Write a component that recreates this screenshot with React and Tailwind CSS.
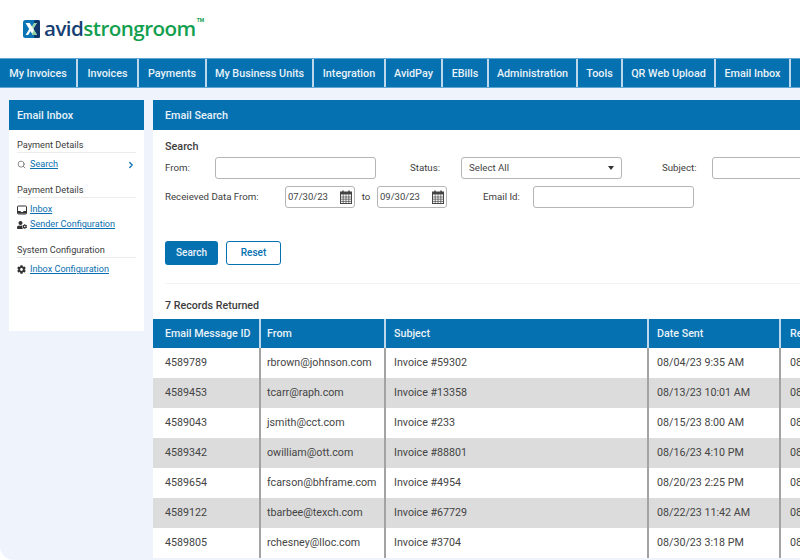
import React from "react";
import { FaCog, FaUserCog } from "react-icons/fa";
import { Search, ChevronRight } from "lucide-react";

const navItems = [
    ["My Invoices", "w-[78px]"],
    ["Invoices", "w-[61px]"],
    ["Payments", "w-[68px]"],
    ["My Business Units", "w-[107px]"],
    ["Integration", "w-[72px]"],
    ["AvidPay", "w-[57px]"],
    ["EBills", "w-[46px]"],
    ["Administration", "w-[89px]"],
    ["Tools", "w-[45px]"],
    ["QR Web Upload", "w-[93px]"],
    ["Email Inbox", "w-[75px]"],
];

const rows = [
    ["4589789", "rbrown@johnson.com", "Invoice #59302", "08/04/23 9:35 AM", "08/04/23"],
    ["4589453", "tcarr@raph.com", "Invoice #13358", "08/13/23 10:01 AM", "08/13/23"],
    ["4589043", "jsmith@cct.com", "Invoice #233", "08/15/23 8:00 AM", "08/15/23"],
    ["4589342", "owilliam@ott.com", "Invoice #88801", "08/16/23 4:10 PM", "08/16/23"],
    ["4589654", "fcarson@bhframe.com", "Invoice #4954", "08/20/23 2:25 PM", "08/20/23"],
    ["4589122", "tbarbee@texch.com", "Invoice #67729", "08/22/23 11:42 AM", "08/22/23"],
    ["4589805", "rchesney@lloc.com", "Invoice #3704", "08/30/23 3:18 PM", "08/30/23"],
];

const columns = [
    "w-[108px] pl-3",
    "w-[125px] pl-[6px]",
    "w-[263px] pl-2",
    "w-[132px] pl-2",
    "w-[60px] pl-[9px]",
];
const headers = ["Email Message ID", "From", "Subject", "Date Sent", "Received"];

const Logo = () => (
    <div className="flex items-center">
        <svg width="17" height="18" viewBox="0 0 17 18" className="mr-[4px]">
            <rect width="17" height="18" rx="2.5" fill="#0a74b5" />
            <rect x="11" width="6" height="18" rx="1.5" fill="#12386b" />
            <path d="M2.5 3h4.2l2.3 3.8L11.2 3h2.6l-3.5 5.8L14 15H9.8L7.5 11.2 5.2 15H2.6l3.6-6z" fill="#fff" />
            <path d="M9 6.8 11.2 3h2.6l-3.5 5.8L14 15H9.8l-0.7-1.2L11 10z" fill="#8fd0a0" />
        </svg>
        <span className="font-['Open_Sans',sans-serif] text-[20.6px] font-semibold leading-none tracking-[-0.55px] text-[#173f74]">
            avid
        </span>
        <span className="font-['Open_Sans',sans-serif] text-[20.6px] font-semibold leading-none tracking-[-0.55px] text-[#12a04f]">
            strongroom
        </span>
        <span className="mb-4 ml-px text-[5px] font-bold leading-none text-[#12a04f]">TM</span>
    </div>
);

const InboxIcon = () => (
    <svg width="10" height="10" viewBox="0 0 10 10">
        <rect x="0.5" y="1" width="9" height="8" rx="0.8" fill="none" stroke="#333" />
        <path d="M1 6h2.5l0.5 1h2l0.5-1H9v2.5H1z" fill="#333" />
    </svg>
);

const CalendarIcon = () => (
    <svg width="12" height="14" viewBox="0 0 12 14" className="shrink-0">
        <rect x="0.5" y="2" width="11" height="11.5" fill="none" stroke="#444" />
        <rect x="0.5" y="2" width="11" height="2.5" fill="#444" />
        <path d="M3 0.5v3M9 0.5v3" stroke="#444" strokeWidth="1.5" />
        <path d="M0.5 7h11M0.5 9.2h11M0.5 11.4h11M3.2 4.5v9M6 4.5v9M8.8 4.5v9" stroke="#555" strokeWidth="0.8" />
    </svg>
);

const SideGroup = ({ title, className, children }) => (
    <div className={className}>
        <p className="border-b border-[#ececec] pb-[1px] text-[9.2px] leading-[13px] text-[#3d3d3d]">
            {title}
        </p>
        <div className="mt-[5px] flex flex-col gap-[2px]">{children}</div>
    </div>
);

const SideLink = ({ icon, label, active }) => (
    <div className="flex h-[13px] items-center">
        <span className="flex w-[13px] shrink-0 items-center">{icon}</span>
        <a className="text-[9.1px] leading-[13px] text-[#0b6fb0] underline">{label}</a>
        {active && <ChevronRight size={10} strokeWidth={3} className="ml-auto text-[#0b6fb0]" />}
    </div>
);

const Field = ({ className }) => (
    <div className={`h-[22px] rounded-[3px] border border-[#b5b5b5] bg-white ${className}`}></div>
);

const DateField = ({ value }) => (
    <div className="flex h-[22px] w-[70px] items-center justify-between rounded-[3px] border border-[#b5b5b5] bg-white pl-[2px] pr-[2px] text-[9.5px] text-[#444]">
        <span>{value}</span>
        <CalendarIcon />
    </div>
);

export default function App() {
    return (
        <div className="flex h-[560px] w-[800px] flex-col overflow-hidden bg-white font-['Roboto',sans-serif]">
            <div className="flex h-[58px] shrink-0 items-center rounded-tl-[14px] bg-white pb-px pl-[23px]">
                <Logo />
            </div>
            <nav className="flex h-[30px] shrink-0 border-y border-[#5fa6d2] bg-[#0571b0]">
                {navItems.map(([label, width]) => (
                    <div
                        key={label}
                        className={`flex shrink-0 items-center justify-center border-r-2 border-[#bcd8ea] pt-[2px] text-[10.8px] font-medium text-[#e9f2f9] ${width}`}
                    >
                        {label}
                    </div>
                ))}
            </nav>
            <div className="flex min-h-0 flex-1 items-start gap-[9px] rounded-bl-[14px] bg-[#eff3fb] pl-[9px] pt-3">
                <aside className="h-[231px] w-[135px] shrink-0 bg-white">
                    <div className="flex h-[30px] items-center bg-[#0571b0] pl-2 pt-[2px] text-[10.8px] font-medium text-[#e9f2f9]">
                        Email Inbox
                    </div>
                    <div className="px-2 pt-2">
                        <SideGroup title="Payment Details">
                            <SideLink icon={<Search size={9} className="text-[#666]" />} label="Search" active />
                        </SideGroup>
                        <SideGroup title="Payment Details" className="mt-3">
                            <SideLink icon={<InboxIcon />} label="Inbox" />
                            <SideLink icon={<FaUserCog size={10} className="text-[#333]" />} label="Sender Configuration" />
                        </SideGroup>
                        <SideGroup title="System Configuration" className="mt-3">
                            <SideLink icon={<FaCog size={9} className="text-[#333]" />} label="Inbox Configuration" />
                        </SideGroup>
                    </div>
                </aside>
                <main className="flex h-[458px] w-[700px] shrink-0 flex-col bg-white">
                    <div className="flex h-[30px] shrink-0 items-center bg-[#0571b0] pl-3 pt-[2px] text-[10.8px] font-medium text-[#e9f2f9]">
                        Email Search
                    </div>
                    <div className="h-[168px] shrink-0 pl-3 pt-[10px] text-[9.7px] text-[#3d3d3d]">
                        <p className="text-[10.8px] font-medium leading-[13px]">Search</p>
                        <div className="mt-1 flex h-[22px] items-center">
                            <span className="w-[50px]">From:</span>
                            <Field className="w-[161px]" />
                            <span className="ml-[34px] w-[51px]">Status:</span>
                            <div className="flex h-[22px] w-[161px] items-center justify-between rounded-[3px] border border-[#b5b5b5] px-[7px] text-[#444]">
                                <span>Select All</span>
                                <span className="h-0 w-0 border-x-[3px] border-t-[4px] border-x-transparent border-t-[#333]"></span>
                            </div>
                            <span className="ml-10 w-[50px]">Subject:</span>
                            <Field className="w-[120px]" />
                        </div>
                        <div className="mt-[7px] flex h-[22px] items-center">
                            <span className="w-[120px]">Receieved Data From:</span>
                            <DateField value="07/30/23" />
                            <span className="w-[22px] text-center">to</span>
                            <DateField value="09/30/23" />
                            <span className="ml-[36px] w-[50px]">Email Id:</span>
                            <Field className="w-[161px]" />
                        </div>
                        <div className="mt-[33px] flex gap-2">
                            <button className="h-6 w-[53px] rounded-[3px] bg-[#0571b0] pb-[2px] text-[10px] font-medium text-[#e9f2f9]">
                                Search
                            </button>
                            <button className="h-6 w-[55px] rounded-[3px] border border-[#0571b0] bg-white pb-[2px] text-[10px] font-medium text-[#0571b0]">
                                Reset
                            </button>
                        </div>
                        <div className="mt-[18px] border-t border-[#f2f2f2]"></div>
                    </div>
                    <p className="h-[14px] shrink-0 pl-3 text-[10.7px] font-medium leading-[16px] text-[#3d3d3d]">
                        7 Records Returned
                    </p>
                    <table className="mt-[7px] w-[688px] table-fixed border-separate border-spacing-0 text-[10.7px]">
                        <thead>
                            <tr className="h-[29px] bg-[#0571b0] text-[#e9f2f9]">
                                {headers.map((h, i) => (
                                    <th key={h} className={`border-r-2 border-[#bcd8ea] pr-0 pt-[2px] text-left font-medium ${columns[i]}`}>
                                        {h}
                                    </th>
                                ))}
                            </tr>
                        </thead>
                        <tbody>
                            {rows.map((r, i) => (
                                <tr key={r[0]} className={`h-[30px] text-[#444] ${i % 2 === 1 ? "bg-[#dcdcdc]" : "bg-white"}`}>
                                    {r.map((c, j) => (
                                        <td key={j} className={`overflow-hidden whitespace-nowrap border-r-2 border-[#a3a3a3] ${columns[j]}`}>
                                            {c}
                                        </td>
                                    ))}
                                </tr>
                            ))}
                        </tbody>
                    </table>
                </main>
            </div>
        </div>
    );
}
